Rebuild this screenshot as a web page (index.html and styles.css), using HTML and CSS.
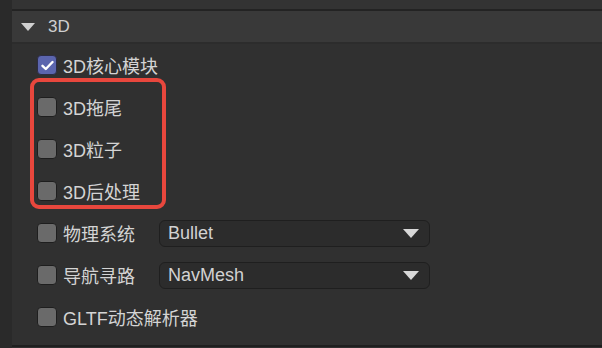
FILE: index.html
```html
<!DOCTYPE html>
<html lang="zh">
<head>
<meta charset="utf-8">
<link rel="stylesheet" href="styles.css">
</head>
<body>
<div class="app">
  <div class="gutter"></div>
  <div class="panel">
    <div class="topband"></div>
    <div class="header">
      <span class="caret"></span>
      <span class="title">3D</span>
    </div>
    <div class="content">
      <div class="row">
        <span class="cb checked"><svg width="13" height="11" viewBox="0 0 13 11"><path d="M1.5 5.8 L4.8 9 L11.5 2" fill="none" stroke="#fff" stroke-width="2.4" stroke-linecap="round" stroke-linejoin="round"/></svg></span>
        <span class="label">3D核心模块</span>
      </div>
      <div class="group">
        <div class="row"><span class="cb"></span><span class="label">3D拖尾</span></div>
        <div class="row"><span class="cb"></span><span class="label">3D粒子</span></div>
        <div class="row"><span class="cb"></span><span class="label">3D后处理</span></div>
        <div class="highlight"></div>
      </div>
      <div class="row">
        <span class="cb"></span><span class="label fixed">物理系统</span>
        <div class="select"><span>Bullet</span><span class="arrow"></span></div>
      </div>
      <div class="row">
        <span class="cb"></span><span class="label fixed">导航寻路</span>
        <div class="select"><span>NavMesh</span><span class="arrow"></span></div>
      </div>
      <div class="row">
        <span class="cb"></span><span class="label">GLTF动态解析器</span>
      </div>
    </div>
    <div class="bottomline"></div>
  </div>
</div>
</body>
</html>
```
FILE: styles.css
```css
html, body {
  margin: 0;
  padding: 0;
  background: #2a2a2a;
  width: 602px;
  height: 348px;
  overflow: hidden;
  font-family: "Liberation Sans", "Noto Sans CJK SC", sans-serif;
  color: #d2d2d2;
}
.app {
  display: flex;
  height: 348px;
}
.gutter {
  width: 12px;
  background: #2a2a2a;
  flex: none;
}
.panel {
  flex: 1;
  display: flex;
  flex-direction: column;
  background: #303030;
}
.topband {
  height: 9px;
  background: #333333;
  border-bottom: 2px solid #232323;
}
.header {
  height: 31px;
  background: #393939;
  border-bottom: 2px solid #2c2c2c;
  display: flex;
  align-items: center;
}
.caret {
  width: 0;
  height: 0;
  margin-left: 9px;
  border-left: 7px solid transparent;
  border-right: 7px solid transparent;
  border-top: 8px solid #d0d0d0;
}
.title {
  margin-left: 13px;
  font-size: 17px;
  color: #cfcfcf;
}
.content {
  flex: 1;
  padding-left: 25px;
}
.row {
  height: 42px;
  display: flex;
  align-items: center;
}
.group {
  position: relative;
}
.highlight {
  position: absolute;
  left: -7px;
  top: -8px;
  width: 128px;
  height: 123px;
  border: 4px solid #e8473d;
  border-radius: 9px;
}
.cb {
  width: 18px;
  height: 18px;
  border-radius: 4px;
  background: #6a6a6a;
  border: 1px solid #1e1e1e;
  flex: none;
  display: flex;
  align-items: center;
  justify-content: center;
}
.cb.checked {
  background: #5b65ae;
  border-color: #2c2c44;
}
.label {
  margin-left: 6px;
  font-size: 18px;
  color: #d4d4d4;
}
.label.fixed {
  width: 90px;
}
.select {
  width: 251px;
  height: 25px;
  margin-left: 6px;
  background: #2c2c2c;
  border: 1px solid #1f1f1f;
  border-radius: 6px;
  display: flex;
  align-items: center;
  justify-content: space-between;
  padding: 0 10px 0 8px;
  box-sizing: content-box;
  font-size: 18px;
  color: #d2d2d2;
}
.arrow {
  width: 0;
  height: 0;
  border-left: 8px solid transparent;
  border-right: 8px solid transparent;
  border-top: 9px solid #d8d8d8;
}
.bottomline {
  height: 2px;
  background: #1f1f1f;
  margin-bottom: 1px;
}
```
